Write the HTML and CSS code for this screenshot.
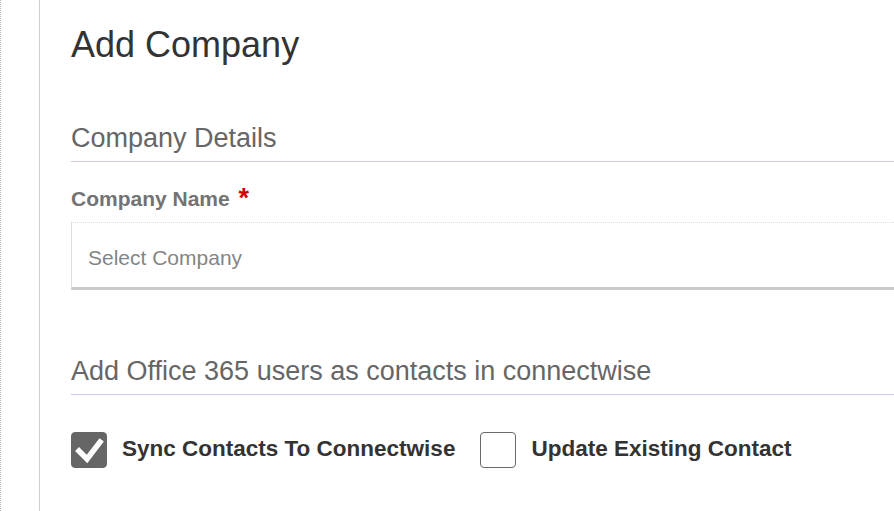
FILE: index.html
```html
<!DOCTYPE html>
<html lang="en">
<head>
    <meta charset="UTF-8">
    <meta name="viewport" content="width=device-width, initial-scale=1.0">
    <title>Add Company</title>
    <link rel="stylesheet" href="styles.css">
</head>
<body>
  <div class="layout">
    <aside class="rail"></aside>

    <main class="panel">
      <h1 class="page-title">Add Company</h1>

      <section class="group">
        <h2 class="group-title">Company Details</h2>
        <label class="field-label">Company Name <span class="required">*</span></label>
        <div class="select-box">
          <span class="placeholder">Select Company</span>
        </div>
      </section>

      <section class="group group-contacts">
        <h2 class="group-title">Add Office 365 users as contacts in connectwise</h2>
        <div class="check-row">
          <label class="check">
            <span class="box box-on">
              <svg viewBox="0 0 36 36" width="36" height="36">
                <polyline points="8,19 16,27 29,10" fill="none" stroke="#fff" stroke-width="5.5" stroke-linecap="square"/>
              </svg>
            </span>
            <span class="check-text">Sync Contacts To Connectwise</span>
          </label>
          <label class="check">
            <span class="box"></span>
            <span class="check-text">Update Existing Contact</span>
          </label>
        </div>
      </section>
    </main>
  </div>
</body>
</html>
```

FILE: styles.css
```css
* {
    margin: 0;
    padding: 0;
    box-sizing: border-box;
}
body {
    overflow: hidden;
    background: #fff;
    font-family: "Liberation Sans", Arial, sans-serif;
}
.layout {
    display: flex;
    min-height: 100vh;
}
.rail {
    width: 40px;
    flex: none;
    border-left: 1px dotted #b5b5b5;
    border-right: 1px solid #cfcfcf;
}
.panel {
    flex: 1;
    padding: 25px 0 0 31px;
    margin-right: -12px;
}
.page-title {
    font-size: 36px;
    font-weight: normal;
    line-height: 40px;
    color: #333;
}
.group-title {
    font-size: 27px;
    font-weight: normal;
    line-height: 32px;
    color: #666;
    padding-bottom: 7px;
    border-bottom: 1px solid #c9cbef;
}
.group {
    margin-top: 57px;
}
.field-label {
    display: block;
    margin-top: 25px;
    font-size: 21px;
    font-weight: bold;
    line-height: 24px;
    color: #737373;
}
.required {
    color: #d40000;
    font-size: 27px;
    line-height: 10px;
    vertical-align: -1px;
    margin-left: 3px;
}
.select-box {
    margin-top: 11px;
    height: 68px;
    padding: 23px 16px 0;
    border: 1px solid #dedede;
    border-top-style: dotted;
    border-bottom: 3px solid #cbcbcb;
}
.placeholder {
    font-size: 21px;
    line-height: 24px;
    color: #858585;
}
.group-contacts {
    margin-top: 65px;
}
.check-row {
    display: flex;
    align-items: center;
    gap: 25px;
    margin-top: 37px;
}
.check {
    display: flex;
    align-items: center;
    gap: 15px;
}
.box {
    width: 36px;
    height: 36px;
    border: 1.5px solid #6a6a6a;
    border-radius: 4px;
    background: #fff;
}
.box-on {
    background: #666;
    border-color: #666;
}
.box-on svg {
    display: block;
    margin: -1.5px;
}
.check-text {
    font-size: 22.5px;
    font-weight: bold;
    color: #333;
    padding-bottom: 2px;
}
```
